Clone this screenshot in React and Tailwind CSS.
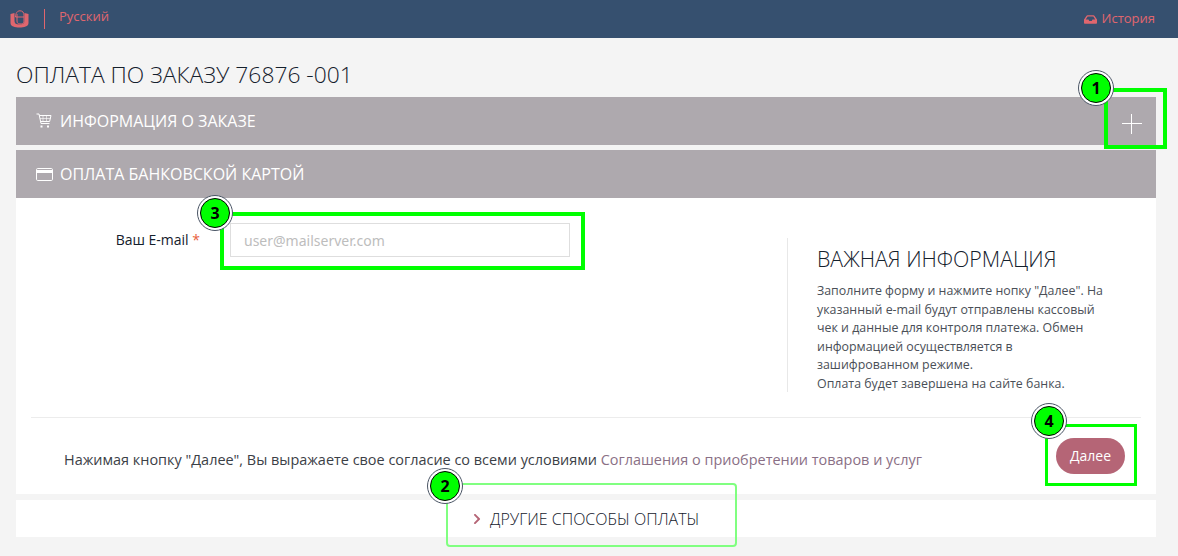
import { FaInbox, FaChevronRight } from "react-icons/fa";

const FONT = { fontFamily: '"Open Sans", "Noto Sans", sans-serif' };

function Logo() {
  return (
    <svg width="19" height="18" viewBox="0 0 19 18" fill="none">
      <path d="M0.5 4 L4.5 3 V11 C4.5 13.5 6 14.5 9.5 14.5 C13 14.5 14.5 13.5 14.5 11 V3 L18.5 4 V13 C18.5 16.5 14 17.5 9.5 17.5 C5 17.5 0.5 16.5 0.5 13 Z" fill="#e0666e" />
      <path d="M5.5 7 C5.5 3 7.5 0.8 10 0.8 C12.5 0.8 14 2.5 14 5 V12 C14 13.5 12 14 10 14 C8 14 7 13 7 11 V4 M5.5 7 H14" stroke="#e0666e" strokeWidth="1" />
    </svg>
  );
}

function CartIcon() {
  return (
    <svg width="16" height="16" viewBox="0 0 16 16" fill="none" stroke="white" strokeWidth="1">
      <path d="M0.5 1 H3 L5 10.5 H13.5" />
      <path d="M3.4 2.5 H15 L13.6 8.5 H4.6" />
      <path d="M4 5.5 H14.5 M7 2.5 V8.5 M10.5 2.5 V8.5" strokeWidth="0.6" />
      <rect x="4.5" y="12.5" width="2" height="2" fill="white" stroke="none" />
      <rect x="11" y="12.5" width="2" height="2" fill="white" stroke="none" />
    </svg>
  );
}

function CardIcon() {
  return (
    <svg width="17" height="13" viewBox="0 0 17 13" fill="none">
      <rect x="0.5" y="0.5" width="16" height="12" rx="1.2" stroke="white" />
      <rect x="1" y="2" width="15" height="3" fill="white" />
    </svg>
  );
}

function Marker({ n, className }) {
  return (
    <div className={`absolute w-9 h-9 rounded-full bg-white border border-gray-600 flex items-center justify-center ${className}`}>
      <div className="w-[30px] h-[30px] rounded-full bg-[#00ff00] border border-black flex items-center justify-center text-black font-bold text-base">
        {n}
      </div>
    </div>
  );
}

function PanelHead({ icon, children }) {
  return (
    <div className="h-12 bg-[#aea9ae] flex items-center pl-5 text-white text-base">
      <span className="w-[24px] flex items-center">{icon}</span>
      {children}
    </div>
  );
}

export default function App() {
  return (
    <div className="relative w-[1178px] h-[556px] overflow-hidden bg-[#f4f4f4] text-[#1d2733]" style={FONT}>
      {/* шапка */}
      <header className="h-[38px] bg-[#36506f] flex items-center justify-between pl-[10px] pr-[23px] text-[#e0666e] text-[13px]">
        <div className="flex items-center">
          <Logo />
          <span className="w-px h-5 bg-[#e0666e] ml-[15px] mr-[14px]" />
          <span className="-mt-1 text-[13px]">Русский</span>
        </div>
        <div className="flex items-center gap-[5px]">
          <FaInbox className="text-[13px]" />
          <span>История</span>
        </div>
      </header>

      <div className="pl-4 pr-[22px]">
        <h1 className="text-[22.8px] font-light leading-[32px] mt-[21px] mb-[6px] text-[#14202c]">ОПЛАТА ПО ЗАКАЗУ 76876 -001</h1>

        <div className="relative">
          <PanelHead icon={<CartIcon />}>ИНФОРМАЦИЯ О ЗАКАЗЕ</PanelHead>
          <span className="absolute right-[14px] top-[26px] w-5 h-px bg-white" />
          <span className="absolute right-[24px] top-[17px] w-px h-5 bg-white" />
        </div>

        <div className="mt-[5px]">
          <PanelHead icon={<CardIcon />}>ОПЛАТА БАНКОВСКОЙ КАРТОЙ</PanelHead>
        </div>

        {/* форма */}
        <div className="bg-white h-[296px] px-[15px]">
          <div className="flex h-[219px]">
            <div className="w-[756px] flex items-start pt-[25px]">
              <label className="w-[199px] text-right text-sm leading-[34px] pr-[30px] shrink-0 text-[#14202c]">
                Ваш E-mail <span className="text-[#e8603c]">*</span>
              </label>
              <input
                readOnly
                placeholder="user@mailserver.com"
                className="w-[340px] h-[34px] border border-[#dedede] px-[13px] text-sm bg-white outline-none placeholder:text-[#bdbdbd]"
                style={{ fontFamily: '"Noto Sans", sans-serif' }}
              />
            </div>
            <div className="mt-[40px] h-[154px] border-l border-[#e8e8e8] pl-[29px] w-[330px]">
              <h2 className="text-[21.3px] font-light leading-[30px] mt-[6px] mb-[8px] text-[#14202c]">ВАЖНАЯ ИНФОРМАЦИЯ</h2>
              <p className="w-[295px] text-[12.4px] leading-[18.5px] text-[#4a4f57]">
                Заполните форму и нажмите нопку "Далее". На указанный e-mail будут отправлены кассовый чек и данные для контроля платежа. Обмен информацией осуществляется в зашифрованном режиме.
                <br />
                Оплата будет завершена на сайте банка.
              </p>
            </div>
          </div>
          <div className="border-t border-[#ececec] flex items-center justify-between h-[77px] pl-[33px] pr-[16px] text-[14.45px] text-[#3b4046]">
            <p className="mt-[7px]">
              Нажимая кнопку "Далее", Вы выражаете свое согласие со всеми условиями{" "}
              <span className="text-[#8a6f85]">Соглашения о приобретении товаров и услуг</span>
            </p>
            <button className="w-[69px] h-9 rounded-full bg-[#b56576] text-white text-sm">Далее</button>
          </div>
        </div>

        <div className="mt-[6px] h-[37px] bg-white flex items-center pl-[455px] text-base font-light text-[#14202c]">
          <FaChevronRight className="text-[#b56576] text-xs mr-[7px]" />
          ДРУГИЕ СПОСОБЫ ОПЛАТЫ
        </div>
      </div>

      {/* разметка поверх скриншота */}
      <div className="absolute left-[1104px] top-[88px] w-[63px] h-[61px] border-[4px] border-[#00ff00]" />
      <div className="absolute left-[220px] top-[212px] w-[365px] h-[58px] border-[4px] border-[#00ff00]" />
      <div className="absolute left-[1045px] top-[424px] w-[92px] h-[62px] border-[3px] border-[#00ff00]" />
      <div className="absolute left-[446px] top-[483px] w-[291px] h-[64px] border-2 border-[#80ff80] rounded-sm" />
      <Marker n="1" className="left-[1078px] top-[70px]" />
      <Marker n="3" className="left-[197px] top-[195px]" />
      <Marker n="4" className="left-[1031px] top-[403px]" />
      <Marker n="2" className="left-[427px] top-[468px]" />
    </div>
  );
}
